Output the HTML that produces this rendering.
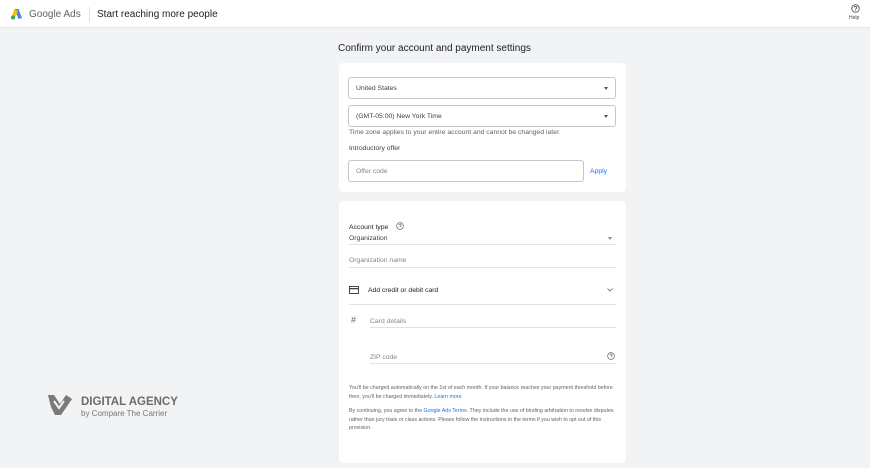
<!DOCTYPE html>
<html><head><style>
*{margin:0;padding:0;box-sizing:border-box}
body{width:870px;height:468px;background:#f1f3f4;font-family:"Liberation Sans",Arial,sans-serif;position:relative;overflow:hidden;color:#3c4043}
.a{position:absolute}
.hdr{left:0;top:0;width:870px;height:28px;background:#fff;border-bottom:1px solid #e6e6e6}
.card{background:#fff;border-radius:4px;left:339px;width:287px}
.box{border:1px solid #c4c7c5;border-radius:3px;background:#fff}
.t{font-size:6.8px;color:#3c4043;white-space:nowrap}
.g{color:#80868b}
.line{height:1px;background:#e3e3e3}
.caret{width:0;height:0;border-left:2.5px solid transparent;border-right:2.5px solid transparent;border-top:3px solid #555}
</style></head><body>
<div class="a hdr"></div>
<svg class="a" style="left:10px;top:8px" width="13" height="12" viewBox="0 0 13 12">
<path d="M4.5 1 L8.5 1 L12 10 L8.5 11 Z" fill="#4285f4"/>
<path d="M4.5 1 L1.5 9 L5 10 L8 3 Z" fill="#fbbc04"/>
<circle cx="3" cy="9.5" r="2" fill="#34a853"/>
</svg>
<div class="a" style="left:29px;top:9px;font-size:10px;color:#5f6368">Google Ads</div>
<div class="a" style="left:89px;top:7px;width:1px;height:15px;background:#e0e0e0"></div>
<div class="a" style="left:97px;top:9px;font-size:10px;color:#202124">Start reaching more people</div>
<svg class="a" style="left:851px;top:4px" width="9" height="9" viewBox="0 0 10 10"><circle cx="5" cy="5" r="4.2" fill="none" stroke="#444" stroke-width="0.9"/><path d="M3.6 4a1.4 1.4 0 1 1 2 1.2c-.5.3-.6.5-.6 1" fill="none" stroke="#444" stroke-width="0.9"/><circle cx="5" cy="7.4" r=".5" fill="#444"/></svg>
<div class="a" style="left:849px;top:15px;font-size:5px;color:#444">Help</div>

<div class="a" style="left:338px;top:43px;font-size:10px;color:#202124">Confirm your account and payment settings</div>

<div class="a card" style="top:63px;height:129px"></div>
<div class="a box" style="left:348px;top:77px;width:268px;height:22px"></div>
<div class="a t" style="left:356px;top:85px">United States</div>
<div class="a caret" style="left:604px;top:87px"></div>
<div class="a box" style="left:348px;top:105px;width:268px;height:22px"></div>
<div class="a t" style="left:356px;top:113px">(GMT-05:00) New York Time</div>
<div class="a caret" style="left:604px;top:115px"></div>
<div class="a t g" style="left:349px;top:129px;color:#5f6368">Time zone applies to your entire account and cannot be changed later.</div>
<div class="a t" style="left:349px;top:145px">Introductory offer</div>
<div class="a box" style="left:348px;top:160px;width:236px;height:22px"></div>
<div class="a t g" style="left:356px;top:168px">Offer code</div>
<div class="a t" style="left:590px;top:168px;color:#1a73e8">Apply</div>

<div class="a card" style="top:201px;height:262px"></div>
<div class="a t" style="left:349px;top:224px;color:#202124">Account type</div>
<svg class="a" style="left:396px;top:222px" width="8" height="8" viewBox="0 0 10 10"><circle cx="5" cy="5" r="4.2" fill="none" stroke="#666" stroke-width="0.9"/><path d="M3.6 4a1.4 1.4 0 1 1 2 1.2c-.5.3-.6.5-.6 1" fill="none" stroke="#666" stroke-width="0.9"/></svg>
<div class="a t" style="left:349px;top:235px">Organization</div>
<div class="a caret" style="left:608px;top:237px;border-top-color:#888"></div>
<div class="a line" style="left:349px;top:244px;width:267px"></div>
<div class="a t g" style="left:349px;top:257px">Organization name</div>
<div class="a line" style="left:349px;top:267px;width:267px"></div>
<svg class="a" style="left:349px;top:286px" width="10" height="8" viewBox="0 0 10 8"><rect x=".5" y=".5" width="9" height="7" fill="none" stroke="#444"/><rect x=".5" y="2" width="9" height="1.3" fill="#444"/></svg>
<div class="a t" style="left:368px;top:287px;color:#202124">Add credit or debit card</div>
<svg class="a" style="left:607px;top:288px" width="6" height="4" viewBox="0 0 6 4"><path d="M.5.5 3 3 5.5.5" fill="none" stroke="#666" stroke-width=".8"/></svg>
<div class="a line" style="left:349px;top:304px;width:267px"></div>
<div class="a" style="left:351px;top:315px;font-size:9px;color:#666">#</div>
<div class="a t g" style="left:370px;top:318px">Card details</div>
<div class="a line" style="left:370px;top:327px;width:246px"></div>
<div class="a t g" style="left:370px;top:354px">ZIP code</div>
<svg class="a" style="left:607px;top:352px" width="8" height="8" viewBox="0 0 10 10"><circle cx="5" cy="5" r="4.2" fill="none" stroke="#666" stroke-width="0.9"/><path d="M3.6 4a1.4 1.4 0 1 1 2 1.2c-.5.3-.6.5-.6 1" fill="none" stroke="#666" stroke-width="0.9"/></svg>
<div class="a line" style="left:370px;top:363px;width:246px"></div>
<div class="a" style="left:349px;top:384px;width:268px;font-size:5.3px;line-height:9px;color:#5f6368">You'll be charged automatically on the 1st of each month. If your balance reaches your payment threshold before then, you'll be charged immediately. <span style="color:#1a73e8">Learn more</span></div>
<div class="a" style="left:349px;top:407px;width:268px;font-size:5.3px;line-height:8.5px;color:#5f6368">By continuing, you agree to the <span style="color:#1a73e8">Google Ads Terms</span>. They include the use of binding arbitration to resolve disputes rather than jury trials or class actions. Please follow the instructions in the terms if you wish to opt out of this provision.</div>

<svg class="a" style="left:47px;top:393px" width="27" height="24" viewBox="0 0 27 24"><path d="M1 2 L7 2 L13 11 L19 2 L25 6 L14 22 L8 22 L4 14 Z" fill="#7a7a7a"/><path d="M7 8 L12 15 L17 8" fill="none" stroke="#f1f3f4" stroke-width="2"/></svg>
<div class="a" style="left:81px;top:396px;font-size:11.5px;font-weight:bold;color:#6b6b6b">DIGITAL AGENCY</div>
<div class="a" style="left:81px;top:409px;font-size:8px;color:#777">by Compare The Carrier</div>
</body></html>
